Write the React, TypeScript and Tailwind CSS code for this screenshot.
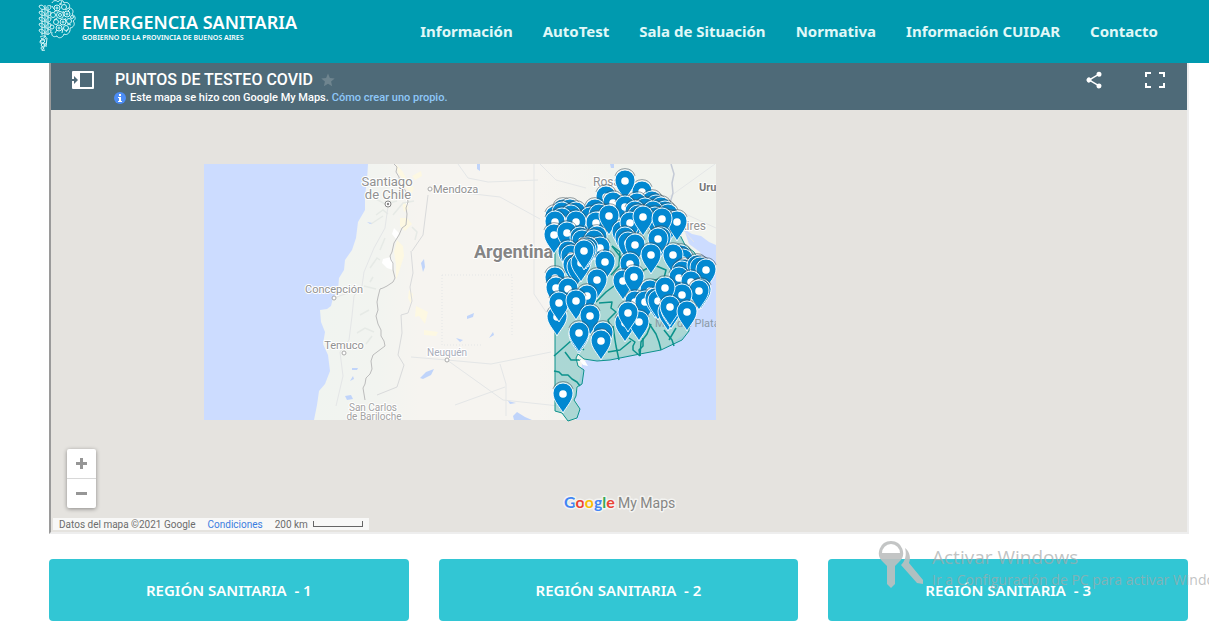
const navLinks = [
  "Información",
  "AutoTest",
  "Sala de Situación",
  "Normativa",
  "Información CUIDAR",
  "Contacto",
];

const regions = [1, 2, 3];

// [x, y] of the hole of each pin, drawn back to front
const pins = [
  [642, 192], [606, 197], [625, 181], [652, 202], [613, 203], [637, 204], [656, 206],
  [661, 208], [625, 207], [645, 209], [665, 212], [595, 210], [635, 212], [653, 212],
  [563, 210], [570, 210], [576, 213], [555, 217], [562, 213], [571, 216], [668, 215],
  [590, 218], [599, 215], [562, 219], [555, 222], [596, 223], [576, 222], [638, 216],
  [655, 218], [670, 222], [677, 222], [609, 216], [622, 232], [630, 223], [643, 217],
  [662, 219], [554, 235], [567, 233], [580, 238], [582, 241], [597, 237], [594, 241],
  [600, 248], [625, 238], [628, 243], [568, 252], [571, 256], [661, 238], [658, 239],
  [635, 245], [573, 265], [577, 267], [581, 263], [588, 248], [586, 250], [584, 251],
  [651, 255], [681, 256], [683, 260], [673, 255], [605, 262], [630, 264], [685, 270],
  [682, 272], [697, 266], [700, 268], [706, 270], [679, 278], [691, 282], [555, 278],
  [597, 280], [623, 281], [634, 277], [556, 288], [568, 289], [701, 290], [699, 291],
  [650, 291], [682, 295], [587, 296], [635, 302], [645, 302], [655, 299], [658, 301],
  [665, 288], [557, 317], [559, 303], [576, 301], [668, 312], [671, 310], [670, 307],
  [590, 316], [687, 312], [625, 323], [639, 322], [628, 313], [603, 333], [579, 335],
  [579, 333], [601, 341], [563, 394],
];

const districts = [
  "M554 356 L572 340 L584 350",
  "M554 371l5 1 3 3 6 0 4 4 5 3 3 4",
  "M596 302l10-10 8-6 12-22-14-18",
  "M599 303l13-1-1 6 5 4-8 8 2 6-6 8",
  "M613 326l2 14 1 6 3 14",
  "M629 338l3 2 3 2-2 4 0 4 7 6",
  "M640 356l-1-6 4-4 0-8",
  "M651 324l-4 10-6 8-1 14",
  "M648 322l8 12 3 8 2 8",
  "M664 330l8 10 2 6",
  "M676 328l-7 12",
  "M640 272l14-7 12 5-2 8-14 3",
  "M612 246l8 6-1 14-8 9",
  "M565 352l6 8 10 0",
  "M608 352l12-2 11-9",
];

function Emblem() {
  return (
    <svg viewBox="0 0 38 52" className="h-[52px] w-[38px] shrink-0" fill="none" stroke="#d5f5f6" strokeWidth="1" aria-hidden="true">
      {/* Crown of flowers */}
      <g>
        <path d="M14 3c1-3 5-3 6-1 1-3 6-2 6 1 4-2 7 2 5 5 4 0 5 4 3 6 4 2 4 6 1 7 3 3 0 7-3 7 1 4-3 8-6 6-1 4-6 5-7 2-4 2-6-1-5-4" />
        <circle cx="19" cy="8" r="3" />
        <circle cx="19" cy="8" r="1" />
        <circle cx="26" cy="7" r="2.500" />
        <circle cx="29" cy="14" r="3" />
        <circle cx="29" cy="14" r="1" />
        <circle cx="22" cy="15" r="3.500" />
        <circle cx="22" cy="15" r="1.500" />
        <circle cx="31" cy="21" r="2.500" />
        <circle cx="25" cy="22" r="3" />
        <circle cx="25" cy="22" r="1" />
        <circle cx="18" cy="22" r="2.500" />
        <circle cx="28" cy="28" r="2.500" />
        <circle cx="21" cy="28" r="3" />
        <circle cx="21" cy="28" r="1" />
        <circle cx="15" cy="15" r="2.500" />
        <circle cx="14" cy="27" r="2" />
        <circle cx="34" cy="17" r="1.500" />
        <path d="M24 1l-2 4M31 8l-4 2M16 12l3-2M33 25l-4-1M24 33l1-5M17 33l2-3M25 11l1 2M19 18l-3 2M32 9l-2 2M27 18l1 2M21 4l3 0M14 6l2 3M28 32l2-3" />
      </g>
      {/* Leaves of the stem */}
      <path d="M1 6c3-2 5 0 6 3-3 1-5 0-6-3ZM1 12c3-2 5 0 6 3-3 1-5 0-6-3ZM1 18c3-2 5 0 6 3-3 1-5 0-6-3ZM1 24c3-2 5 0 6 3-3 1-5 0-6-3ZM1 30c3-2 5 0 6 3-3 1-5 0-6-3Z" />
      <path d="M13 6c-3-1-5 0-5 4 3 1 5-1 5-4ZM13 12c-3-1-5 0-5 4 3 1 5-1 5-4ZM13 18c-3-1-5 0-5 4 3 1 5-1 5-4ZM13 24c-3-1-5 0-5 4 3 1 5-1 5-4ZM13 30c-3-1-5 0-5 4 3 1 5-1 5-4Z" />
      <path d="M7 5v32M10 7v28M4 9v26" />
      <path d="M2 37c3-2 7-1 6 1-1 3-6 1-6 4s5 0 6 2-5 2-5 4 3 3 4 2M3 38l4 3-4 4 3 4M8 36l-6 5 5 4-3 6M9 38l-1 9" />
    </svg>
  );
}

function CityDot({ x, y }: { x: number; y: number }) {
  return <circle cx={x} cy={y} r="2" fill="#fff" stroke="#aaa" strokeWidth="1" />;
}

function MapDrawing() {
  return (
    <svg
      viewBox="204 164 512 256"
      className="absolute left-[153px] top-[54px] h-[256px] w-[512px] overflow-visible"
      role="img"
      aria-label="Mapa de puntos de testeo"
      fontFamily='Roboto, "Liberation Sans", sans-serif'
    >
      <defs>
        <clipPath id="tiles">
          <rect x="204" y="164" width="512" height="256" />
        </clipPath>
        <linearGradient id="land" x1="0" x2="1" y1="0" y2="0">
          <stop offset="0.2" stopColor="#f0f4f0" />
          <stop offset="0.34" stopColor="#f2f4f0" />
          <stop offset="0.42" stopColor="#f6f4f0" />
          <stop offset="0.65" stopColor="#f6f4f0" />
          <stop offset="0.8" stopColor="#f1f3ee" />
        </linearGradient>
        <g id="pin">
          <path
            d="M-10 -4a10.500 10.500 0 0 1 20 0"
            fill="none"
            stroke="#3f5562"
            strokeWidth="0.6"
            transform="translate(0 -1)"
          />
          <path
            d="M0 19C-3 13-10 7-10-1a10 10 0 0 1 20 0C10 7 3 13 0 19Z"
            fill="#0288d1"
            stroke="#fff"
            strokeWidth="0.9"
          />
          <circle r="3.800" fill="#fff" />
        </g>
      </defs>

      <g clipPath="url(#tiles)">
        <rect x="204" y="164" width="512" height="256" fill="url(#land)" />
        <path
          d="M204 164H368L367 180 365 196 365 210 358 222 356 238 352 250 345 260 344 270 339 278 338 290 333 298 331 306 327 309 320 310 321 322 325 332 323 344 328 355 330 371 325 384 319 391 317 405 314 420H204Z"
          fill="#ccdcff"
        />
        <path
          d="M684 229 692 234 701 236 709 242 716 245V420H576L580 408 574 398 578 388 581 372 582 364 586 360 610 358 661 350 687 333 698 300 710 270 700 252 689 244Z"
          fill="#ccdcff"
        />

        {/* Cordillera snow and salt flats */}
        <path
          d="M396 164l7 8 5 10 6 6-2 5-5-4-3-8-6-8ZM402 202l5 2 1 5-4 3ZM400 218l7 0 5 6-7 7-5-5ZM397 240l6 6 1 10-5 16-3 8 0-16-2-12ZM409 290l4 4-2 10-3-6ZM416 306l12 6-3 12-6-8-4 1ZM424 330l14 2-2 4-12-1ZM412 176l9-5 1 5-7 4Z"
          fill="#fdf8e2"
        />
        <path d="M383 259l8-2 3 7-1 6-6-2-5-5Z" fill="#fff" />
        <path d="M394 228l5 5-3 6-4-5ZM406 199l3 4-3 3Z" fill="#fff" />
        <path
          d="M376 215l7-5 5 4M371 224l12-8M376 199l9 5 12-3M393 215l10-12 11-2M370 268l7-10 3 2M364 286l12 3M360 315l9-5M357 333l8-5 9 4M380 250l5-12M412 227l5 5-2 8M370 282l3 -5M366 344l6-8"
          fill="none"
          stroke="#e6eae6"
          strokeWidth="1.500"
        />

        {/* Roads */}
        <g fill="none" stroke="#e4e6e7" strokeWidth="1">
          <path d="M388 206l-3 22-11 20-10 24 -2 14-8 10-2 20-3 24-9 12 3 24-7 30M334 298l22-8M430 189l70 8 40 22M540 164l16 16 30 8M458 164l10 14 20 4 50-2M447 360l56 40 56 6M447 360l44 4 60-12M447 360l-36-3M500 364l6 20 0 32M534 164v130l20 30M676 222l18 20M665 200l50-36M668 206l48 22M455 405l50-18" />
          <path d="M442 275h70v60M442 275v70h40" strokeDasharray="1 2" />
        </g>
        <path
          d="M428 195l-5 40-11 16M411 251l2 22 -3 14 2 14-4 12-7 2 1 18 -4 22 6 10-7 22-20 8"
          fill="none"
          stroke="#d9dadb"
        />
        <path
          d="M394 164l3 3-1 5 3 5 1 6 5 7 2 4 1 8-2 6 1 6-1 11-4 3-3 7-5 8-2 9-2 4 1 4 2 3 0 7 2 8-2 4-6 4-4 2-3 1-2 8-1 5 1 8-2 6 2 8 3 6 0 6 3 5 1 5-4 3-8 6-2 6 1 8-2 5-4 4-1 6-2 4 2 12"
          fill="none"
          stroke="#bcbcbc"
          strokeWidth="1"
        />
        <path d="M671 164l3 10-2 9 1 10-3 10" fill="none" stroke="#c4cad6" strokeWidth="1.500" />

        {/* Lakes */}
        <path
          d="M421 263l3-4 1 8-2 5ZM420 378l6-6 8-3-3 6-8 4ZM352 368l6 0-1 2h-5ZM350 381l3-5 1 3ZM345 396l6-1 2 4-6 1ZM467 316l7-3-1 4-6 2ZM513 416l4-4 8 5 7 3h-18ZM508 401l8 2-6 1ZM456 338l7 2-3 2ZM477 164h3v7l-3-2ZM489 338l4-6 1 3ZM367 222l5 1-2 1ZM610 164h4v4h-3Z"
          fill="#c0d4fa"
        />

        <g fill="#919191" stroke="#fff" strokeWidth="2" paintOrder="stroke" strokeLinejoin="round">
          <text x="387" y="186" fontSize="13" textAnchor="middle">Santiago</text>
          <text x="388" y="199" fontSize="13" textAnchor="middle">de Chile</text>
          <text x="433" y="193" fontSize="11">Mendoza</text>
          <text x="334" y="293" fontSize="11" textAnchor="middle">Concepción</text>
          <text x="344" y="349" fontSize="11" textAnchor="middle">Temuco</text>
          <text x="447" y="356" fontSize="10" fill="#a9adba" textAnchor="middle">Neuquén</text>
          <text x="373" y="411" fontSize="10" fill="#a3a3a3" textAnchor="middle">San Carlos</text>
          <text x="374" y="420" fontSize="10" fill="#a3a3a3" textAnchor="middle">de Bariloche</text>
          <text x="593" y="186" fontSize="12">Rosario</text>
          <text x="699" y="191" fontSize="11" fontWeight="700" fill="#777">Uruguay</text>
          <text x="706" y="230" fontSize="12" textAnchor="end">Buenos Aires</text>
          <text x="474" y="258" fontSize="18" fontWeight="700" fill="#858585">Argentina</text>
        </g>
        <CityDot x={430} y={189} />
        <CityDot x={334} y={298} />
        <CityDot x={344} y={353} />
        <CityDot x={447} y={360} />
        <circle cx="388" cy="204" r="3" fill="#fff" stroke="#888" />
        <circle cx="388" cy="204" r="1.200" fill="#888" />
      </g>

      {/* Provincia de Buenos Aires */}
      <path
        d="M555 235L600 205 640 200 675 225 685 245 694 252 706 272 704 292 689 316 689 331 682 340 661 350 640 354 610 360 597 361 584 359 578 354 576 358 578 366 584 370 582 384 577 387 576 396 574 400 580 409 577 418 568 421 562 413 555 411Z"
        fill="#8ccbc9"
        fillOpacity="0.7"
        stroke="#0c928c"
        strokeWidth="1"
      />
      <g fill="none" stroke="#0c928c" strokeWidth="1.500" strokeLinejoin="round">
        {districts.map((d) => (
          <path key={d} d={d} />
        ))}
      </g>
      <path d="M579 359l6 2 3 5-5-1Z" fill="#fff" />
      <g clipPath="url(#tiles)">
        <text x="655" y="327" fontSize="11" fill="#8b9aa5">Mar del Plata</text>
      </g>

      {pins.map(([x, y], i) => (
        <use key={i} href="#pin" x={x} y={y} />
      ))}
    </svg>
  );
}

function MapHeader() {
  return (
    <div className="flex h-[47px] items-start bg-[#4e6a78] pl-5 pr-[22px] pt-[7px] text-white">
      <button type="button" aria-label="Mostrar panel">
        <svg viewBox="0 0 24 20" className="h-5 w-6" aria-hidden="true">
          <path d="M2 1h20a1 1 0 0 1 1 1v16a1 1 0 0 1-1 1H2a1 1 0 0 1-1-1V2a1 1 0 0 1 1-1Zm7 2v14h12V3Z" fill="#fff" fillRule="evenodd" />
          <path d="M1 9h2V6l4 4-4 4v-3H1Z" fill="#4e6a78" />
        </svg>
      </button>
      <div className="ml-5 flex-1">
        <h2 className="flex items-center text-base leading-5 font-medium">
          PUNTOS DE TESTEO COVID
          <svg viewBox="0 0 24 24" className="ml-2 size-3.5" fill="#6f858f" aria-hidden="true">
            <path d="M12 1l3.200 7.500 8.300.8-6.200 5.400 1.800 8.100-7.100-4.200-7.100 4.200 1.800-8.100L.5 9.300l8.300-.8Z" />
          </svg>
        </h2>
        <p className="-ml-px flex items-center text-[11px] leading-4 font-medium">
          <svg viewBox="0 0 12 12" className="mr-1 size-3" aria-hidden="true">
            <circle cx="6" cy="6" r="6" fill="#4c8df6" />
            <path d="M5 2h2v2H5ZM4 5h3v4h1v1H4V9h1V6H4Z" fill="#fff" />
          </svg>
          Este mapa se hizo con Google My Maps.
          <a href="#crear" className="ml-[3px] text-[#8fc8f8]">Cómo crear uno propio.</a>
        </p>
      </div>
      <div className="flex items-center gap-[41px]">
        <button type="button" aria-label="Compartir">
          <svg viewBox="0 0 24 24" className="size-5" fill="#fff" aria-hidden="true">
            <path d="M18 16.100c-.8 0-1.400.3-2 .8l-7.100-4.200c.1-.2.1-.5.1-.7s0-.5-.1-.7L16 7.200c.5.5 1.200.8 2 .8a3 3 0 1 0-3-3c0 .2 0 .5.1.7L8 9.800A3 3 0 1 0 8 14.200l7.100 4.200c-.1.200-.1.400-.1.600a3 3 0 1 0 3-2.900Z" />
          </svg>
        </button>
        <button type="button" aria-label="Pantalla completa">
          <svg viewBox="0 0 20 16" className="h-5 w-5" fill="none" stroke="#fff" strokeWidth="2" aria-hidden="true">
            <path d="M1 5V1h5M14 1h5v4M19 11v4h-5M6 15H1v-4" />
          </svg>
        </button>
      </div>
    </div>
  );
}

function MapFrame() {
  return (
    <section className="border-x-2 border-b-2 border-r-[#eeeeee] border-b-[#eeeeee] border-l-[#9a9a9a] font-[Roboto,'Liberation_Sans',sans-serif]">
      <MapHeader />
      <div className="relative h-[422px] overflow-hidden bg-[#e5e3df]">
        <MapDrawing />

        <div className="absolute bottom-6 left-4 flex flex-col divide-y divide-[#d8d8d8] rounded-xs bg-white shadow-[0_1px_4px_rgba(0,0,0,0.4)]">
          <button type="button" aria-label="Acercar" className="flex h-[30px] w-[29px] items-center justify-center">
            <svg viewBox="0 0 11 11" className="size-[11px]" aria-hidden="true">
              <path d="M4 0h3v4h4v3H7v4H4V7H0V4h4Z" fill="#969696" />
            </svg>
          </button>
          <button type="button" aria-label="Alejar" className="flex h-[29px] w-[29px] items-center justify-center">
            <svg viewBox="0 0 11 11" className="size-[11px]" aria-hidden="true">
              <path d="M0 4h11v3H0Z" fill="#969696" />
            </svg>
          </button>
        </div>

        <div className="absolute bottom-0.5 left-0.5 flex h-3 items-center gap-3 bg-[#f8f8f7] pl-1.5 pr-1.5 text-[10px] whitespace-nowrap text-[#6c6c6c]">
          <span>Datos del mapa ©2021 Google</span>
          <a href="#condiciones" className="text-[#3b7de0]">Condiciones</a>
          <span className="flex items-center gap-[5px]">
            200 km
            <span className="h-1.5 w-[50px] border-x border-b border-[#666]" />
          </span>
        </div>

        <svg viewBox="0 0 116 24" className="absolute bottom-4 left-1/2 h-6 w-[116px] -translate-x-1/2" role="img" aria-label="Google My Maps">
          <g stroke="#f3f3f1" strokeWidth="3" strokeLinejoin="round" paintOrder="stroke">
            <text x="3" y="16" fontSize="16" fontWeight="700" fontFamily='Lato, "Liberation Sans", sans-serif'>
              <tspan fill="#4285f4">G</tspan>
              <tspan fill="#ea4335">o</tspan>
              <tspan fill="#fbbc05">o</tspan>
              <tspan fill="#4285f4">g</tspan>
              <tspan fill="#34a853">l</tspan>
              <tspan fill="#ea4335">e</tspan>
            </text>
            <text x="57" y="16" fontSize="14" fill="#868684" fontFamily='Roboto, "Liberation Sans", sans-serif'>My Maps</text>
          </g>
        </svg>
      </div>
    </section>
  );
}

function ActivationNotice() {
  return (
    <div className="pointer-events-none absolute top-[540px] left-[878px] flex gap-2 font-['Open_Sans',sans-serif] whitespace-nowrap text-[#a5a9a9]/70">
      <svg viewBox="0 0 46 50" className="h-[50px] w-[46px]" aria-hidden="true">
        <path
          d="M13 1a12 12 0 0 1 8 21l-4 4v18l-4 4-4-4V26l-4-4A12 12 0 0 1 13 1Zm0 3a9 9 0 0 0-9 9h18a9 9 0 0 0-9-9Z"
          fill="#bcbfbf"
          fillOpacity="0.9"
          fillRule="evenodd"
        />
        <path d="M27 8c5 4 6 10 4 15l14 17v4l-6-1-16-18c4-4 6-10 4-17Z" fill="#bcbfbf" fillOpacity="0.9" />
      </svg>
      <div>
        <p className="text-[19px] leading-[34px]">Activar Windows</p>
        <p className="text-sm leading-3">Ir a Configuración de PC para activar Windows.</p>
      </div>
    </div>
  );
}

export default function App() {
  return (
    <div className="relative overflow-hidden bg-white font-['Noto_Sans','Liberation_Sans',sans-serif]">
      <header className="flex h-[63px] items-center justify-between bg-[#009aaf] pr-[51px] pl-[38px] text-white">
        <a href="#inicio" className="flex h-full items-start gap-1.5">
          <Emblem />
          <span className="pt-3">
            <span className="block text-lg leading-5 font-semibold">EMERGENCIA SANITARIA</span>
            <span className="block text-[7px] leading-3 font-semibold">GOBIERNO DE LA PROVINCIA DE BUENOS AIRES</span>
          </span>
        </a>
        <nav className="flex gap-[30px] text-[15px] font-bold whitespace-nowrap text-[#e0f8f8]">
          {navLinks.map((label) => (
            <a key={label} href="#">
              {label}
            </a>
          ))}
        </nav>
      </header>

      <main className="pr-5 pl-[49px]">
        <MapFrame />
        <div className="mt-[25px] mr-px grid grid-cols-3 gap-[30px]">
          {regions.map((n) => (
            <button
              key={n}
              type="button"
              className="h-[62px] rounded bg-[#32c6d4] text-[15px] font-semibold whitespace-pre text-white"
            >
              {`REGIÓN SANITARIA  - ${n}`}
            </button>
          ))}
        </div>
      </main>

      <ActivationNotice />
    </div>
  );
}
